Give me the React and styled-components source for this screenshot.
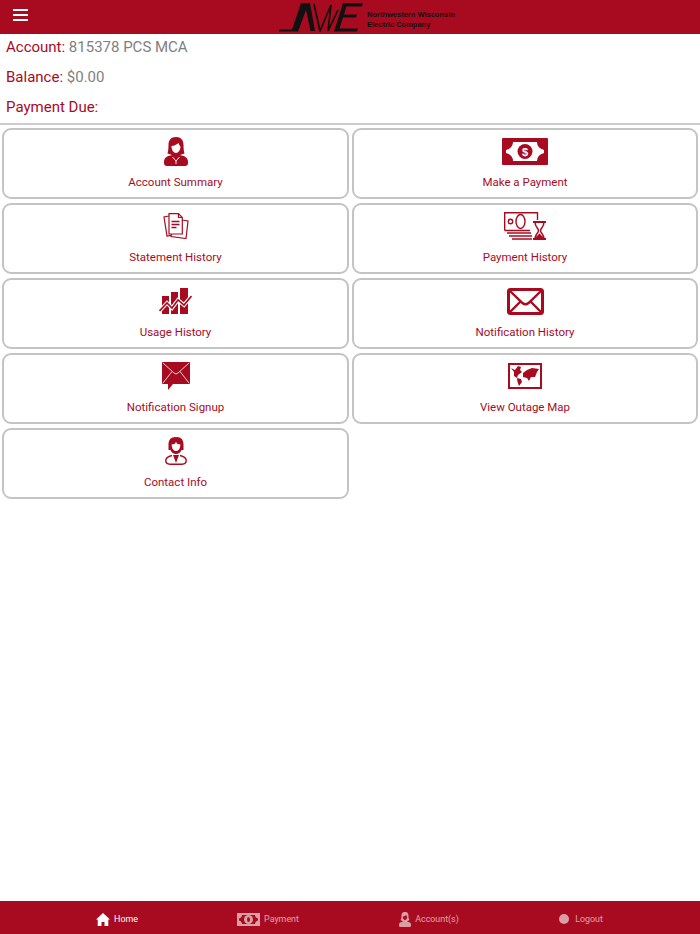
import styled, { createGlobalStyle } from "styled-components";

const RED = "#a80b1f";

const GlobalStyle = createGlobalStyle`
  html, body { margin: 0; padding: 0; background: #fff; }
  body { font-family: Roboto, "Liberation Sans", sans-serif; }
`;

const Page = styled.div`
  width: 700px;
  height: 934px;
  display: flex;
  flex-direction: column;
  overflow: hidden;
`;

const Header = styled.header`
  height: 34px;
  flex: none;
  background: ${RED};
  display: flex;
  align-items: center;
  position: relative;
`;

const Burger = styled.button`
  width: 15px;
  height: 12px;
  margin: -4px 0 0 13px;
  padding: 0;
  border: 0;
  background: transparent;
  display: flex;
  flex-direction: column;
  justify-content: space-between;
  span {
    display: block;
    height: 2px;
    background: #fff;
  }
`;

const Logo = styled.div`
  position: absolute;
  left: 279px;
  top: 2px;
  display: flex;
  gap: 4px;
`;

const LogoText = styled.div`
  padding-top: 8px;
  font-family: "Liberation Sans", sans-serif;
  font-size: 7.5px;
  line-height: 10px;
  font-weight: 700;
  color: #111;
  white-space: nowrap;
`;

const Info = styled.section`
  flex: none;
  height: 89px;
  padding: 0 6px;
  border-bottom: 2px solid #cdcdcd;
  display: flex;
  flex-direction: column;
`;

const InfoRow = styled.div`
  height: 30px;
  flex: none;
  line-height: 26px;
  font-size: 15px;
  color: ${RED};
  white-space: nowrap;
  span {
    color: #7f7f7f;
  }
`;

const Grid = styled.main`
  flex: 1;
  padding: 3px 2px 0 2px;
  display: grid;
  grid-template-columns: 347px 346px;
  grid-auto-rows: 71px;
  column-gap: 3px;
  row-gap: 4px;
  align-content: start;
`;

const Card = styled.a`
  box-sizing: border-box;
  border: 2px solid #c4c4c4;
  border-radius: 9px;
  display: flex;
  flex-direction: column;
  align-items: center;
  color: ${RED};
`;

const CardIcon = styled.div`
  height: 40px;
  margin-top: 1px;
  display: flex;
  align-items: center;
  justify-content: center;
`;

const CardLabel = styled.div`
  margin-top: 3px;
  font-size: 11.5px;
  line-height: 16px;
  white-space: nowrap;
`;

const TabBar = styled.nav`
  height: 33px;
  flex: none;
  background: ${RED};
  display: grid;
  grid-template-columns: 154px 148px 174px 130px;
  padding: 3px 40px 0;
  box-sizing: border-box;
`;

const Tab = styled.div`
  display: flex;
  align-items: center;
  justify-content: center;
  gap: ${(p) => p.$gap || 4}px;
  font-size: 8.9px;
  color: #fff;
  opacity: ${(p) => (p.$active ? 1 : 0.6)};
  white-space: nowrap;
`;

const LogoMark = () => (
  <svg width="84" height="30" viewBox="0 0 84 30">
    <path
      fill="#111"
      d="M0 29.500 V27.500 H13 L22 1 H31 L36 29 H31.500 L27 8 L19 29.500 Z"
    />
    <path
      fill="none"
      stroke="#111"
      strokeWidth="1.700"
      d="M35 2 L41 29 L52 3 L49 29 L59 8"
    />
    <path
      fill="#111"
      d="M55 29.500 L64 1 H84 L83 4.500 H67.500 L65 12.500 H78 L77 15.500 H64 L60.500 26.500 H79 L78 29.500 Z"
    />
  </svg>
);

const WomanIcon = () => (
  <svg width="24" height="29" viewBox="0 0 24 29" fill={RED}>
    <path d="M12 0 C17 0 19.500 3 19.500 8 C19.500 12 20 15 20.500 16.500 L16 18 C20 19 24 20 24 25 V26 Q24 29 21 29 H3 Q0 29 0 26 V25 C0 20 4 19 8 18 L3.500 16.500 C4 15 4.500 12 4.500 8 C4.500 3 7 0 12 0 Z" />
    <path fill="#fff" d="M7.500 9 C10 9 13 7.500 14.500 6 C15 8 16 9 16.500 9.500 C16.500 13 14.500 16 12 16 C9.500 16 7.500 13 7.500 9 Z" />
    <path fill="none" stroke="#fff" strokeWidth="0.900" d="M8.500 20 L12 24 L15.500 20 M12 24 L12 27" />
  </svg>
);

const BillIcon = () => (
  <svg width="46" height="27" viewBox="0 0 46 27">
    <path
      fill={RED}
      fillRule="evenodd"
      d="M1 0 H45 Q46 0 46 1 V26 Q46 27 45 27 H1 Q0 27 0 26 V1 Q0 0 1 0 Z M11 4 Q11 10 4 12 V15 Q11 17 11 23 H35 Q35 17 42 15 V12 Q35 10 35 4 Z"
    />
    <circle cx="23" cy="13.500" r="7.500" fill={RED} />
    <text x="23" y="17.500" textAnchor="middle" fontSize="11" fontWeight="700" fill="#fff" fontFamily="Liberation Sans, sans-serif">$</text>
  </svg>
);

const StatementIcon = () => (
  <svg width="26" height="26" viewBox="0 0 26 26" fill="none" stroke={RED} strokeWidth="1.200">
    <path d="M6 3 L1 4 L4 23 L8 22.300" />
    <path d="M19 7 L25 8 L23 25.500 L8 23.500 L8.500 21" />
    <path d="M6 0.700 H15.500 L19.300 4.500 V21 H6 Z" />
    <path d="M15.500 0.700 V4.500 H19.300" />
    <path strokeWidth="1.500" d="M8.500 8.500 H16.500 M8.500 11.500 H16.500 M8.500 14.500 H13.500" />
  </svg>
);

const PaymentHistoryIcon = () => (
  <svg width="42" height="28" viewBox="0 0 42 28" fill="none" stroke={RED}>
    <path strokeWidth="1.400" d="M0.700 18.500 V0.700 H33.500 V8 M0.700 18.500 H26" />
    <circle cx="6.500" cy="9.500" r="2.200" strokeWidth="1.400" />
    <ellipse cx="16.500" cy="9.500" rx="4.500" ry="7" strokeWidth="1.400" />
    <path strokeWidth="1.500" d="M3 21 H27 M5 24 H28 M8 27 H28" />
    <path strokeWidth="2" d="M29 10 H42 M29 27 H42" />
    <path strokeWidth="1.500" d="M31 10 C31 15.500 34.500 16 34.500 18.500 C34.500 21.500 31 22 31 27 M40 10 C40 15.500 36.500 16 36.500 18.500 C36.500 21.500 40 22 40 27" />
    <path fill={RED} stroke="none" d="M31.500 27 C32 23.500 35 23 35.500 21 C36 23 39 23.500 39.500 27 Z" />
  </svg>
);

const UsageIcon = () => (
  <svg width="33" height="26" viewBox="0 0 33 26" fill={RED}>
    <path d="M3 8 H10 V26 H3 Z M12 4 H19 V26 H12 Z M21 0 H29 V26 H21 Z" />
    <path fill="none" stroke="#fff" strokeWidth="3.800" d="M0.500 23 L8 15 L13 20 L19 12 L25 17 L32.500 8" />
    <path fill="none" stroke={RED} strokeWidth="1.600" d="M0.500 23 L8 15 L13 20 L19 12 L25 17 L32.500 8" />
  </svg>
);

const EnvelopeIcon = () => (
  <svg width="37" height="27" viewBox="0 0 37 27" fill="none" stroke={RED}>
    <rect x="1.500" y="1.500" width="34" height="24" rx="2" strokeWidth="3" />
    <path strokeWidth="2.400" d="M2.500 2.500 L15.500 15 Q18.500 17.500 21.500 15 L34.500 2.500 M2.500 24.500 L13.500 13.500 M34.500 24.500 L23.500 13.500" />
  </svg>
);

const SignupIcon = () => (
  <svg width="28" height="28" viewBox="0 0 28 28">
    <path fill={RED} d="M1 0 H27 Q28 0 28 1 V21 Q28 22 27 22 H11 L6 28 L6 22 H1 Q0 22 0 21 V1 Q0 0 1 0 Z" />
    <path fill="none" stroke="#fff" strokeWidth="0.800" d="M1 1 L12 11 Q14 13 16 11 L27 1 M1 21 L10 9.500 M27 21 L18 9.500" />
  </svg>
);

const MapIcon = () => (
  <svg width="34" height="26" viewBox="0 0 34 26">
    <rect x="1" y="1" width="32" height="24" fill="none" stroke={RED} strokeWidth="2" />
    <path fill={RED} d="M3 5 L7 7 L10 3 L13 4 L12 7 L14 9 L10 12 L9 15 L6 13 L6 9 Z M9 15 L13 16 L14 19 L11 23 L9.500 19 Z M15 10 L19 7 L24 5 L31 6 L29 9 L27 14 L23 14 L21 18 L19 15 L15 14 Z" />
  </svg>
);

const ContactIcon = () => (
  <svg width="22" height="28" viewBox="0 0 22 28" fill={RED}>
    <path d="M11 0 C16.500 0 18.500 3 18.500 7.500 V13 H16.500 C15.500 15.500 13.500 17 11 17 C8.500 17 6.500 15.500 5.500 13 H3.500 V7.500 C3.500 3 5.500 0 11 0 Z" />
    <path fill="#fff" d="M11 5 L12.500 7 L15.500 7.500 L15 10 C14.500 12.500 13 14 11 14 C9 14 7.500 12.500 7 10 L6.500 7.500 L9.500 7 Z" />
    <path fill="none" stroke={RED} strokeWidth="1.400" d="M7 18.500 C3 19.500 0.800 20.500 0.800 23.500 C0.800 26 2.500 27.200 5 27.200 H17 C19.500 27.200 21.200 26 21.200 23.500 C21.200 20.500 19 19.500 15 18.500" />
    <path d="M8 18 H14 L11 26 Z" />
  </svg>
);

const HomeIcon = () => (
  <svg width="14" height="13" viewBox="0 0 14 13" fill="#fff">
    <path d="M7 0 L14 6.500 L12.300 6.500 L12.300 13 L8.500 13 L8.500 9 L5.500 9 L5.500 13 L1.700 13 L1.700 6.500 L0 6.500 Z" />
  </svg>
);

const TabBillIcon = () => (
  <svg width="23" height="13" viewBox="0 0 23 13">
    <path fill="#fff" fillRule="evenodd" d="M0 0 H23 V13 H0 Z M5 2 Q5 4.500 2 5.500 V7.500 Q5 8.500 5 11 H18 Q18 8.500 21 7.500 V5.500 Q18 4.500 18 2 Z" />
    <circle cx="11.500" cy="6.500" r="4.500" fill="#fff" />
    <ellipse cx="11.500" cy="6.500" rx="1.500" ry="2.500" fill={RED} />
  </svg>
);

const TabPersonIcon = () => (
  <svg width="12" height="15" viewBox="0 0 12 15" fill="#fff">
    <path d="M6 0 C9 0 9.500 2 9.500 4 C9.500 6 10 7.500 10.500 8 L8 9.500 C10 10.300 12 10.500 12 12.500 V13.500 Q12 15 10.500 15 H1.500 Q0 15 0 13.500 V12.500 C0 10.500 2 10.300 4 9.500 L1.500 8 C2 7.500 2.500 6 2.500 4 C2.500 2 3 0 6 0 Z" />
    <path fill={RED} d="M3.800 4.500 C5 4.500 6.500 3.800 7.200 3 C7.500 4 8 4.500 8.200 4.700 C8.200 6.500 7.200 8 6 8 C4.800 8 3.800 6.500 3.800 4.500 Z" />
  </svg>
);

const TabDotIcon = () => (
  <svg width="10" height="10" viewBox="0 0 10 10">
    <circle cx="5" cy="5" r="5" fill="#fff" />
  </svg>
);

const cards = [
  { label: "Account Summary", Icon: WomanIcon },
  { label: "Make a Payment", Icon: BillIcon },
  { label: "Statement History", Icon: StatementIcon },
  { label: "Payment History", Icon: PaymentHistoryIcon },
  { label: "Usage History", Icon: UsageIcon },
  { label: "Notification History", Icon: EnvelopeIcon },
  { label: "Notification Signup", Icon: SignupIcon },
  { label: "View Outage Map", Icon: MapIcon },
  { label: "Contact Info", Icon: ContactIcon },
];

const App = () => {
  return (
    <Page>
      <GlobalStyle />
      <Header>
        <Burger aria-label="Menu">
          <span />
          <span />
          <span />
        </Burger>
        <Logo>
          <LogoMark />
          <LogoText>
            Northwestern Wisconsin
            <br />
            Electric Company
          </LogoText>
        </Logo>
      </Header>
      <Info>
        <InfoRow>
          Account: <span>815378 PCS MCA</span>
        </InfoRow>
        <InfoRow>
          Balance: <span>$0.00</span>
        </InfoRow>
        <InfoRow>Payment Due:</InfoRow>
      </Info>
      <Grid>
        {cards.map(({ label, Icon }) => (
          <Card key={label}>
            <CardIcon>
              <Icon />
            </CardIcon>
            <CardLabel>{label}</CardLabel>
          </Card>
        ))}
      </Grid>
      <TabBar>
        <Tab $active>
          <HomeIcon />
          Home
        </Tab>
        <Tab>
          <TabBillIcon />
          Payment
        </Tab>
        <Tab>
          <TabPersonIcon />
          Account(s)
        </Tab>
        <Tab $gap={6}>
          <TabDotIcon />
          Logout
        </Tab>
      </TabBar>
    </Page>
  );
};

export default App;
